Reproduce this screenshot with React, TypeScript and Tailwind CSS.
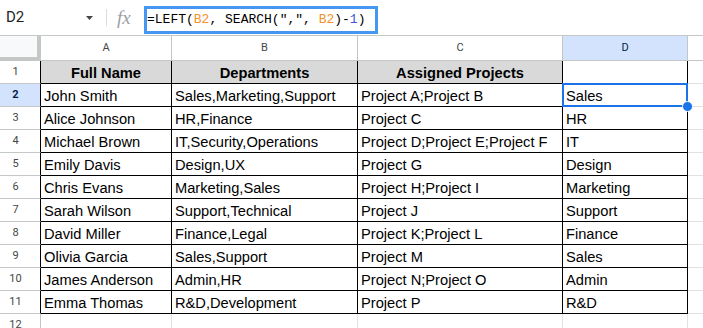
import React from "react";

const rows: [string, string, string, string][] = [
  ["John Smith", "Sales,Marketing,Support", "Project A;Project B", "Sales"],
  ["Alice Johnson", "HR,Finance", "Project C", "HR"],
  ["Michael Brown", "IT,Security,Operations", "Project D;Project E;Project F", "IT"],
  ["Emily Davis", "Design,UX", "Project G", "Design"],
  ["Chris Evans", "Marketing,Sales", "Project H;Project I", "Marketing"],
  ["Sarah Wilson", "Support,Technical", "Project J", "Support"],
  ["David Miller", "Finance,Legal", "Project K;Project L", "Finance"],
  ["Olivia Garcia", "Sales,Support", "Project M", "Sales"],
  ["James Anderson", "Admin,HR", "Project N;Project O", "Admin"],
  ["Emma Thomas", "R&D,Development", "Project P", "R&D"],
];

const widths = ["w-[131px]", "w-[186px]", "w-[205px]", "w-[125px]"];

const sans = { fontFamily: '"Liberation Sans", Arial, sans-serif' };

export default function App() {
  return (
    <div className="w-[703px] h-[328px] overflow-hidden bg-white" style={sans}>
      {/* Formula bar */}
      <div className="h-[36px] border-b border-[#c4c7c5] flex items-center">
        <div className="w-[106px] shrink-0 flex items-center justify-between pl-[6px] pr-[13px]">
          <span className="text-[15px] text-[#1f1f1f]" style={{ fontFamily: "Roboto, sans-serif" }}>D2</span>
          <svg width="7" height="4" viewBox="0 0 7 4">
            <path d="M0 0 L7 0 L3.5 4 Z" fill="#444746" />
          </svg>
        </div>
        <div className="w-px h-[17px] bg-[#dadce0] shrink-0" />
        <div
          className="ml-[10px] w-[18px] text-[19px] leading-none italic text-[#9aa0a6] shrink-0"
          style={{ fontFamily: '"Liberation Serif", "Times New Roman", serif' }}
        >
          fx
        </div>
        <div
          className="ml-[9px] self-end mb-[1px] w-[234px] h-[28px] border-[3px] border-[#4597f2] flex items-center text-[13px] text-black whitespace-pre"
          style={{ fontFamily: '"Liberation Mono", "Courier New", monospace' }}
        >
          <span>=LEFT(</span>
          <span className="text-[#f0932b]">B2</span>
          <span>, SEARCH(",", </span>
          <span className="text-[#f0932b]">B2</span>
          <span>)-</span>
          <span className="text-[#3b57d6]">1</span>
          <span>)</span>
        </div>
      </div>

      {/* Column headers */}
      <div className="h-[25px] flex text-[11px] text-[#444746]" style={{ fontFamily: "Roboto, Arial, sans-serif" }}>
        <div className="w-[41px] shrink-0 bg-[#f8f9fa] border-r-4 border-b-4 border-[#c4c7c5]" />
        {["A", "B", "C"].map((c, i) => (
          <div key={c} className={`${widths[i]} shrink-0 border-r border-b border-[#c4c7c5] flex items-center justify-center`}>
            {c}
          </div>
        ))}
        <div className="w-[125px] shrink-0 border-r border-b border-[#c4c7c5] bg-[#d3e3fd] text-[#041e49] flex items-center justify-center">
          D
        </div>
        <div className="flex-1 border-b border-[#c4c7c5]" />
      </div>

      {/* Row 1 (headers) */}
      <div className="h-[23px] flex">
        <div className="w-[41px] shrink-0 border-r border-b border-b-[#c4c7c5] border-r-black flex items-center justify-center pr-[9px] text-[11px] text-[#444746]" style={{ fontFamily: "Roboto, Arial, sans-serif" }}>
          1
        </div>
        {["Full Name", "Departments", "Assigned Projects"].map((h, i) => (
          <div key={h} className={`${widths[i]} shrink-0 border-r border-b border-black bg-[#d9d9d9] flex items-end justify-center pb-[1px] leading-[17px] text-[14.67px] font-bold text-black`}>
            {h}
          </div>
        ))}
        <div className="w-[125px] shrink-0 border-r border-b border-black" />
        <div className="flex-1 border-b border-[#e1e1e1]" />
      </div>

      {/* Data rows */}
      {rows.map((r, ri) => {
        const n = ri + 2;
        const sel = n === 2;
        return (
          <div key={n} className="h-[23px] flex">
            <div
              className={`w-[41px] shrink-0 border-r border-b border-b-[#c4c7c5] border-r-black flex items-center justify-center pr-[9px] text-[11px] ${
                sel ? "bg-[#d3e3fd] text-[#041e49] font-bold" : "text-[#444746]"
              }`}
              style={{ fontFamily: "Roboto, Arial, sans-serif" }}
            >
              {n}
            </div>
            {r.map((v, ci) => (
              <div
                key={ci}
                className={`${widths[ci]} shrink-0 border-r border-b border-black flex items-end pl-[3px] pb-[1px] leading-[17px] text-[14.67px] text-black whitespace-nowrap ${
                  sel && ci === 3 ? "relative" : ""
                }`}
              >
                {v}
                {sel && ci === 3 && (
                  <>
                    <div className="absolute -left-px -top-px -right-px -bottom-px border-2 border-[#1a73e8]" />
                    <div className="absolute right-[-6px] bottom-[-6px] w-[11px] h-[11px] rounded-full bg-[#1a73e8] border border-white" />
                  </>
                )}
              </div>
            ))}
            <div className="flex-1 border-b border-[#e1e1e1]" />
          </div>
        );
      })}

      {/* Row 12 */}
      <div className="h-[23px] flex">
        <div className="w-[41px] shrink-0 border-r border-[#c4c7c5] flex items-center justify-center pr-[9px] text-[11px] text-[#444746]" style={{ fontFamily: "Roboto, Arial, sans-serif" }}>
          12
        </div>
        {widths.map((w, i) => (
          <div key={i} className={`${w} shrink-0 border-r border-[#e1e1e1]`} />
        ))}
        <div className="flex-1" />
      </div>
    </div>
  );
}
